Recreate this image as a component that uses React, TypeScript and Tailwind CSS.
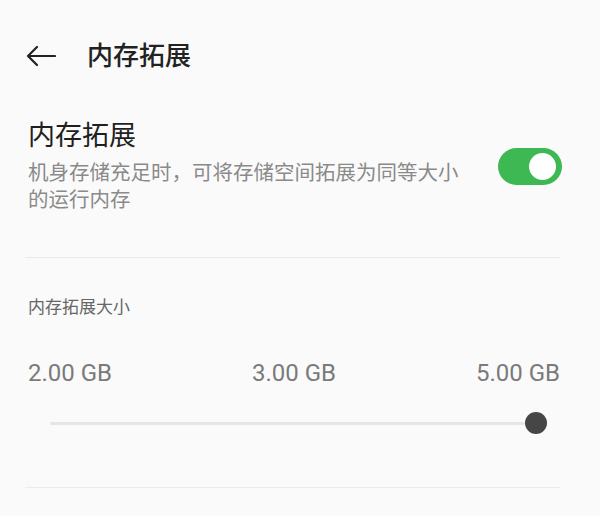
import React from "react";

const font = { fontFamily: "Roboto, 'Noto Sans CJK SC', sans-serif" };

function BackArrow() {
  return (
    <svg width="30" height="22" viewBox="0 0 30 22" fill="none" className="shrink-0">
      <path d="M2 11H29M11 2L2 11L11 20" stroke="#222" strokeWidth="2.2" strokeLinecap="round" strokeLinejoin="round" />
    </svg>
  );
}

export default function App() {
  return (
    <div
      className="w-[600px] h-[516px] overflow-hidden bg-[#fafafa] pl-[28px] pr-[40px]"
      style={font}
    >
      {/* header */}
      <div className="mt-[28px] flex h-[56px] items-center">
        <div className="-ml-[2px]">
          <BackArrow />
        </div>
        <span className="ml-[31px] text-[26px] leading-[34px] font-medium text-[#222]">内存拓展</span>
      </div>

      {/* toggle row */}
      <div className="mt-[35px] flex items-center justify-between">
        <div>
          <div className="text-[27px] leading-[34px] text-[#1f1f1f]">内存拓展</div>
          <div className="mt-[7px] w-[440px] text-[20.5px] leading-[27px] text-[#8a8a8a]">
            机身存储充足时，可将存储空间拓展为同等大小的运行内存
          </div>
        </div>
        <div className="-mr-[2px] flex h-[37px] w-[64px] items-center rounded-full bg-[#3db853] pl-[31px]">
          <div className="h-[27px] w-[27px] rounded-full bg-white" />
        </div>
      </div>

      <div className="-ml-[3px] mt-[43px] h-px bg-[#ebebeb]" />

      {/* slider section */}
      <div className="mt-[37px] text-[17px] leading-[24px] text-[#666]">内存拓展大小</div>

      <div className="mt-[40px] flex justify-between text-[24px] leading-[28px] text-[#7a7a7a]">
        <span>2.00 GB</span>
        <span>3.00 GB</span>
        <span>5.00 GB</span>
      </div>

      <div className="mt-[25px] flex h-[22px] items-center pl-[22px] pr-[13px]">
        <div className="h-[3px] flex-1 rounded-full bg-[#e6e6e6]" />
        <div className="h-[22px] w-[22px] rounded-full bg-[#464646]" />
      </div>

      <div className="-ml-[3px] mt-[53px] h-px bg-[#ebebeb]" />
    </div>
  );
}
